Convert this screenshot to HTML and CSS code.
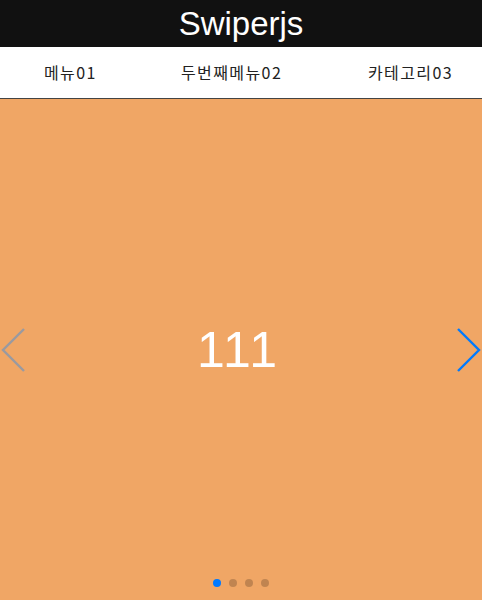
FILE: index.html
```html
<!DOCTYPE html>
<html lang="ko">
<head>
<meta charset="utf-8">
<title>Swiperjs</title>
<link rel="stylesheet" href="styles.css">
</head>
<body>
<header class="title-bar"><h1 class="title">Swiperjs</h1></header>
<nav class="menu">
  <a class="menu-item">메뉴01</a>
  <a class="menu-item">두번째메뉴02</a>
  <a class="menu-item">카테고리03</a>
</nav>
<section class="slider">
  <div class="slide">111</div>
  <div class="arrow arrow-prev">
    <svg width="24" height="46" viewBox="0 0 24 46"><polyline points="23,2 2,23 23,44" fill="none" stroke="currentColor" stroke-width="2.4"/></svg>
  </div>
  <div class="arrow arrow-next">
    <svg width="24" height="46" viewBox="0 0 24 46"><polyline points="1,2 22,23 1,44" fill="none" stroke="currentColor" stroke-width="2.4"/></svg>
  </div>
  <div class="pagination">
    <span class="dot active"></span><span class="dot"></span><span class="dot"></span><span class="dot"></span>
  </div>
</section>
</body>
</html>
```
FILE: styles.css
```css
html, body { margin: 0; padding: 0; background: #fff; }
body { font-family: "Liberation Sans", "Noto Sans CJK KR", sans-serif; }
.title-bar { background: #111; height: 47px; display: flex; align-items: center; justify-content: center; }
.title { margin: 0; color: #fff; font-weight: normal; font-size: 33px; line-height: 46px; }
.menu { border-bottom: 1px solid #444; display: grid; grid-template-columns: 137px 187px auto; align-items: center; padding-left: 44px; padding-bottom: 2px; box-sizing: border-box; height: 52px; }
.menu-item { font-family: "Noto Sans CJK KR", sans-serif; font-size: 16px; color: #222; white-space: nowrap; letter-spacing: 1.4px; }
.slider { position: relative; height: 501px; background: #f0a665; overflow: hidden; }
.slide { height: 100%; display: flex; align-items: center; justify-content: center; color: #fff; font-size: 50px; letter-spacing: 2px; padding-right: 6px; box-sizing: border-box; }
.arrow { position: absolute; top: 228px; height: 46px; width: 24px; }
.arrow-prev { left: 1px; color: #9a9aa0; }
.arrow-next { right: 1px; color: #007aff; }
.arrow svg { display: block; }
.pagination { position: absolute; left: 0; right: 0; top: 480px; display: flex; justify-content: center; gap: 8px; }
.dot { width: 8px; height: 8px; border-radius: 50%; background: #000; opacity: 0.2; }
.dot.active { background: #007aff; opacity: 1; }
```
